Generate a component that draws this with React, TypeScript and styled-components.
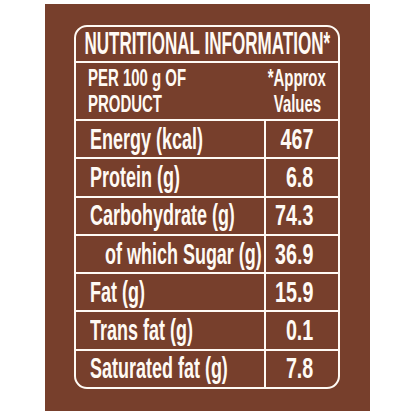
import React from "react";
import styled, { createGlobalStyle } from "styled-components";

type Nutrient = {
	label: string;
	value: string;
	indent?: boolean;
};

const nutrients: Nutrient[] = [
	{ label: "Energy (kcal)", value: "467" },
	{ label: "Protein (g)", value: "6.8" },
	{ label: "Carbohydrate (g)", value: "74.3" },
	{ label: "of which Sugar (g)", value: "36.9", indent: true },
	{ label: "Fat (g)", value: "15.9" },
	{ label: "Trans fat (g)", value: "0.1" },
	{ label: "Saturated fat (g)", value: "7.8" },
];

const GlobalStyle = createGlobalStyle`
	html, body {
		margin: 0;
		padding: 0;
		background: #ffffff;
	}
	body {
		font-family: "Liberation Sans", Arial, sans-serif;
		font-weight: 700;
		color: #fffaf4;
	}
`;

const Panel = styled.div`
	box-sizing: border-box;
	margin: 4px 0 0 45px;
	width: 325px;
	height: 407px;
	background: #773f2c;
	padding: 21px 0 0 29px;
`;

const Table = styled.div`
	box-sizing: border-box;
	width: 266px;
	border: 2px solid #fffaf4;
	border-radius: 13px;
	overflow: hidden;
`;

const Title = styled.div`
	height: 34px;
	border-bottom: 2px solid #fffaf4;
	display: flex;
	align-items: center;
	justify-content: center;
	font-size: 31px;
	white-space: nowrap;
`;

const SubHead = styled.div`
	height: 56px;
	border-bottom: 2px solid #fffaf4;
	display: grid;
	grid-template-columns: 188px minmax(0, 1fr);
	align-items: center;
	font-size: 23px;
	line-height: 26.5px;
`;

const SubLeft = styled.div`
	display: flex;
	flex-direction: column;
	align-items: flex-start;
	padding-left: 12px;
	white-space: nowrap;
`;

const SubRight = styled.div`
	display: flex;
	flex-direction: column;
	align-items: center;
	white-space: nowrap;
	min-width: 0;
	padding-right: 8px;
`;

const Row = styled.div<{ $last?: boolean }>`
	display: grid;
	grid-template-columns: 188px 2px minmax(0, 1fr);
	height: 36.3px;
	border-bottom: ${(p) => (p.$last ? "none" : "2px solid #fffaf4")};
	font-size: 29px;
`;

const Divider = styled.div`
	background: #fffaf4;
`;

const LabelCell = styled.div<{ $indent?: boolean }>`
	display: flex;
	align-items: center;
	padding-left: ${(p) => (p.$indent ? "29px" : "14px")};
	white-space: nowrap;
	min-width: 0;
`;

const ValueCell = styled.div`
	display: flex;
	align-items: center;
	justify-content: flex-end;
	padding-right: 25px;
	white-space: nowrap;
	min-width: 0;
`;

const Squeeze = styled.span<{ $scale: number; $origin?: string }>`
	display: inline-block;
	transform: scaleX(${(p) => p.$scale});
	transform-origin: ${(p) => p.$origin || "left"} center;
`;

const App = () => {
	return (
		<>
			<GlobalStyle />
			<Panel>
				<Table>
					<Title>
						<Squeeze $scale={0.55} $origin="center">
							NUTRITIONAL INFORMATION*
						</Squeeze>
					</Title>
					<SubHead>
						<SubLeft>
							<Squeeze $scale={0.65}>PER 100 g OF</Squeeze>
							<Squeeze $scale={0.65}>PRODUCT</Squeeze>
						</SubLeft>
						<SubRight>
							<Squeeze $scale={0.65} $origin="center">
								*Approx
							</Squeeze>
							<Squeeze $scale={0.65} $origin="center">
								Values
							</Squeeze>
						</SubRight>
					</SubHead>
					{nutrients.map((n, i) => (
						<Row key={n.label} $last={i === nutrients.length - 1}>
							<LabelCell $indent={n.indent}>
								<Squeeze $scale={0.62}>{n.label}</Squeeze>
							</LabelCell>
							<Divider />
							<ValueCell>
								<Squeeze $scale={0.68} $origin="right">
									{n.value}
								</Squeeze>
							</ValueCell>
						</Row>
					))}
				</Table>
			</Panel>
		</>
	);
};

export default App;
